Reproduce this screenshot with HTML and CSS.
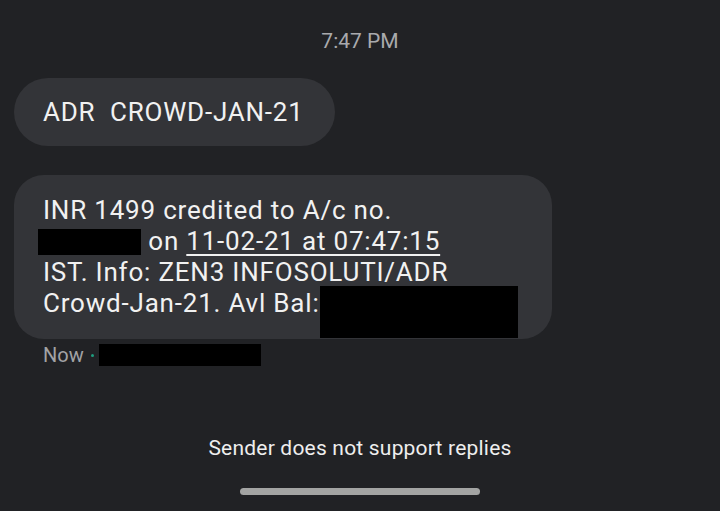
FILE: index.html
```html
<!DOCTYPE html>
<html lang="en">
<head>
    <meta charset="UTF-8">
    <meta name="viewport" content="width=device-width, initial-scale=1.0">
    <title>Messages</title>
    <link rel="stylesheet" href="styles.css">
</head>
<body>
    <div class="thread">
        <div class="timestamp">7:47 PM</div>

        <div class="bubble bubble-short">ADR&nbsp; CROWD-JAN-21</div>

        <div class="bubble bubble-long">
            INR 1499 credited to A/c no.<br>
            <span class="redact redact-acc"></span> on <span class="date">11-02-21 at 07:47:15</span><br>
            IST. Info: ZEN3 INFOSOLUTI/ADR<br>
            Crowd-Jan-21. Avl Bal:<span class="redact redact-bal"></span>
        </div>

        <div class="meta">
            <span class="meta-time">Now</span>
            <span class="dot"></span>
            <span class="redact redact-sim"></span>
        </div>
    </div>

    <div class="footer">
        <p class="no-reply">Sender does not support replies</p>
        <div class="home-bar"></div>
    </div>
</body>
</html>
```

FILE: styles.css
```css
body {
    font-family: Roboto, "Noto Sans", sans-serif;
    background-color: #212225;
    color: #eeeeee;
    margin: 0;
    height: 511px;
    display: flex;
    flex-direction: column;
    overflow: hidden;
}

.thread {
    display: flex;
    flex-direction: column;
    align-items: flex-start;
    padding: 0 14px;
    flex: 1;
}

.timestamp {
    align-self: center;
    font-size: 21px;
    color: #a9aaad;
    margin-top: 29px;
    line-height: 25px;
}

.bubble {
    background-color: #333438;
    font-size: 26px;
    letter-spacing: 0.8px;
    color: #f1f1f1;
}

.bubble-short {
    margin-top: 24px;
    height: 68px;
    line-height: 68px;
    padding: 0 31px 0 29px;
    border-radius: 34px;
}

.bubble-long {
    margin-top: 29px;
    width: 538px;
    box-sizing: border-box;
    padding: 20px 29px 20px 29px;
    line-height: 31px;
    border-radius: 30px;
}

.date {
    text-decoration: underline;
    text-underline-offset: 4px;
    text-decoration-thickness: 2px;
}

.redact {
    display: inline-block;
    background-color: #000;
}

.redact-acc {
    width: 103px;
    height: 26px;
    margin-left: -5px;
    vertical-align: -5px;
}

.redact-bal {
    width: 198px;
    height: 52px;
    vertical-align: top;
    margin-top: -2px;
    margin-bottom: -19px;
}

.meta {
    display: flex;
    align-items: center;
    margin-top: 4px;
    padding-left: 29px;
}

.meta-time {
    font-size: 20px;
    color: #a2a3a5;
}

.dot {
    width: 3px;
    height: 3px;
    border-radius: 50%;
    background-color: #1f9e7f;
    margin: 0 5px 0 7px;
}

.redact-sim {
    width: 162px;
    height: 22px;
}

.footer {
    display: flex;
    flex-direction: column;
    align-items: center;
    padding-bottom: 16px;
}

.no-reply {
    font-size: 21px;
    letter-spacing: 0.2px;
    color: #eeeeee;
    margin: 0 0 28px 0;
}

.home-bar {
    width: 240px;
    height: 7px;
    border-radius: 4px;
    background-color: #a3a4a3;
}
```
